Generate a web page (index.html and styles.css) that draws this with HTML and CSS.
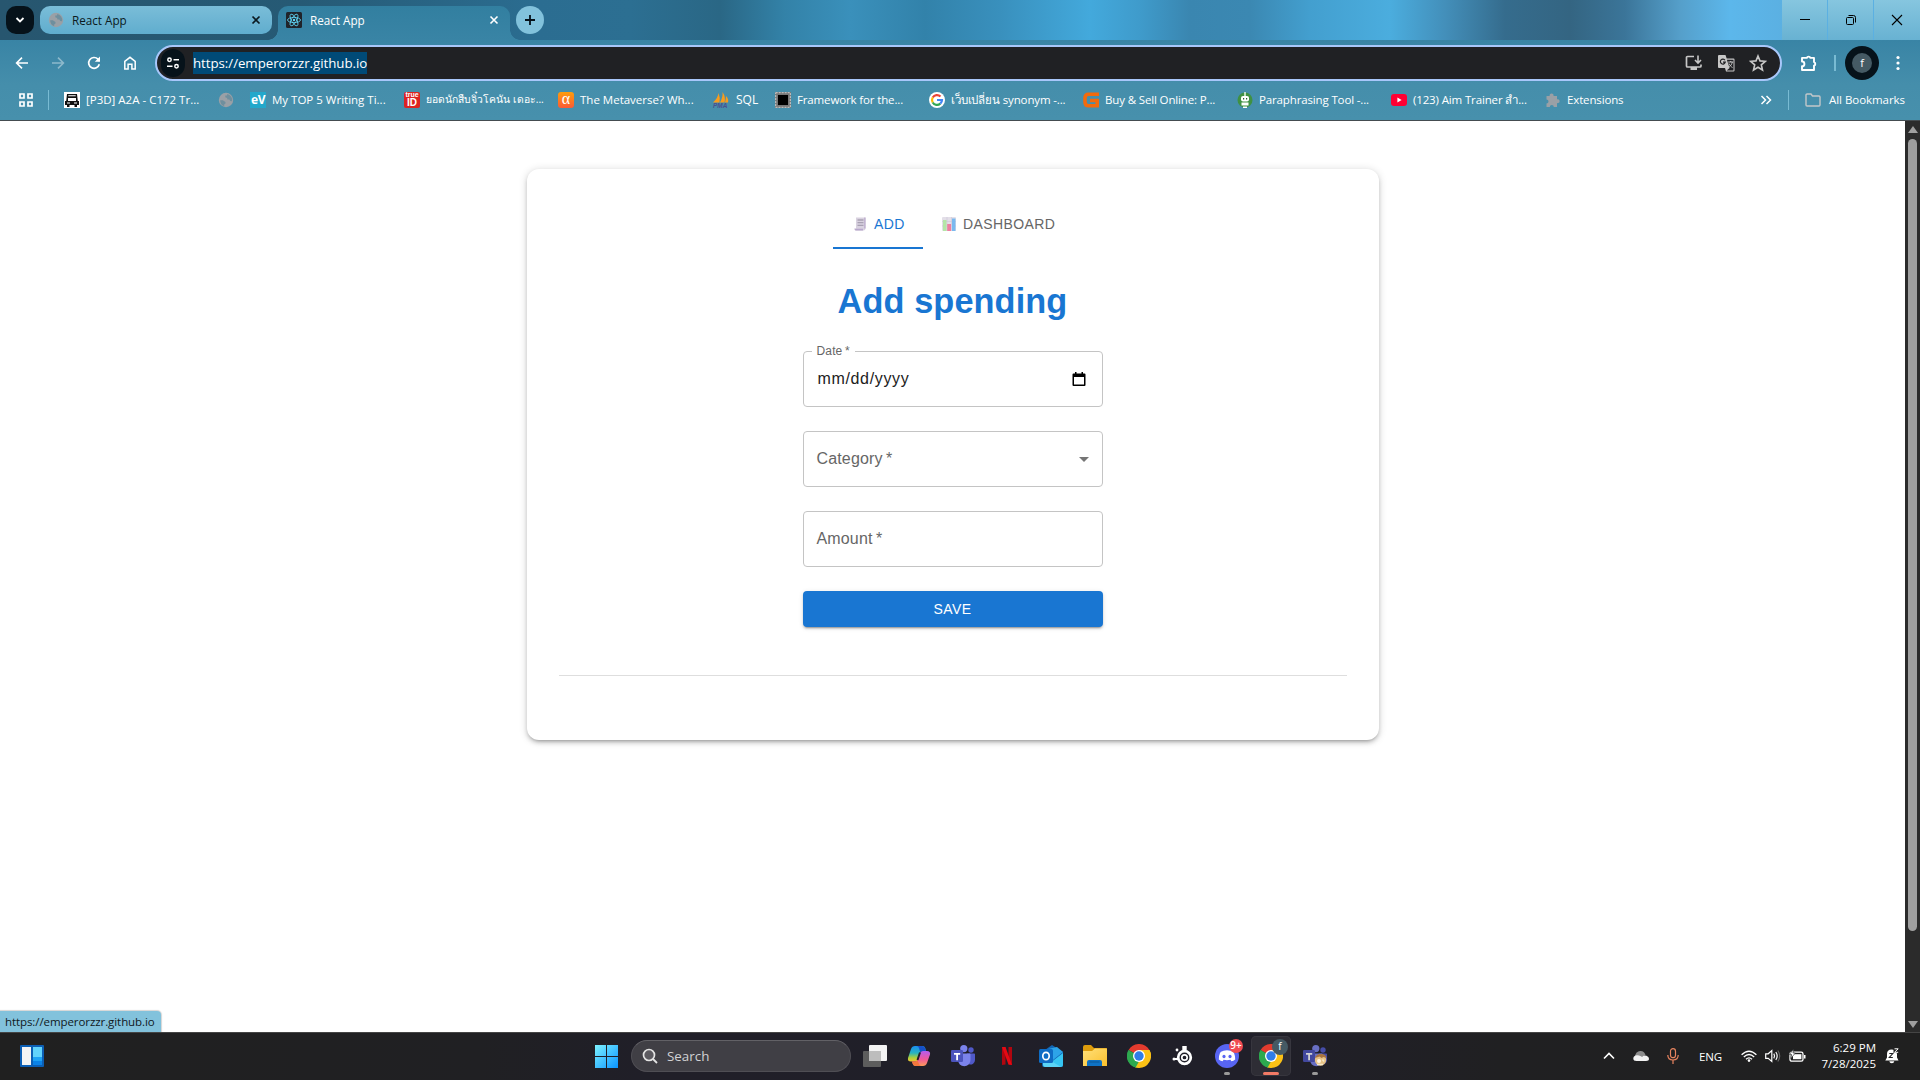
FILE: index.html
```html
<!DOCTYPE html>
<html lang="en">
<head>
<meta charset="utf-8">
<title>React App</title>
<link rel="stylesheet" href="styles.css">
</head>
<body>
<svg class="defs" width="0" height="0">
  <defs>
    <linearGradient id="win" x1="0" y1="0" x2="1" y2="1"><stop offset="0" stop-color="#7df2ff"/><stop offset="1" stop-color="#0a93ff"/></linearGradient>
    <linearGradient id="cpa" x1="0" y1="0" x2="0" y2="1"><stop offset="0" stop-color="#1b8ff0"/><stop offset=".45" stop-color="#27b3c0"/><stop offset=".75" stop-color="#a9cf3c"/><stop offset="1" stop-color="#f5c330"/></linearGradient>
    <linearGradient id="cpb" x1="0" y1="0" x2="0" y2="1"><stop offset="0" stop-color="#b45cf0"/><stop offset=".55" stop-color="#f0589a"/><stop offset="1" stop-color="#fb9a58"/></linearGradient>
    <linearGradient id="fold" x1="0" y1="0" x2="1" y2="1"><stop offset="0" stop-color="#ffe07a"/><stop offset="1" stop-color="#fbc02d"/></linearGradient>
    <symbol id="globe" viewBox="0 0 16 16"><circle cx="8" cy="8" r="7.200" fill="#9aa0a6"/><path d="M2.200 8.300h2.600l2.700 1.600v1.500l-1.300 1v1.800A6.200 6.200 0 0 1 2.200 8.300ZM9.300 2l-.4 1.400H7.300v1.800l1.800.9.300 1.500h2l.8 1.400 1.900.3A6.200 6.200 0 0 0 9.300 2Z" fill="#6f8f9e"/></symbol>
    <symbol id="chrome" viewBox="0 0 24 24"><path d="M12 12L1.600 6A12 12 0 0 1 22.400 6Z" fill="#e33b2e"/><path d="M12 12L22.400 6A12 12 0 0 1 12 24Z" fill="#fbc116"/><path d="M12 12L12 24A12 12 0 0 1 1.600 6Z" fill="#2da94f"/><path d="M12 6H22.400A12 12 0 0 1 24 12L17 14Z" fill="#fbc116"/><path d="M17.200 15L12 24A12 12 0 0 1 8 23.300L12 15Z" fill="#fbc116"/><path d="M1.600 6L7 15L12 17.500L8.600 23.500A12 12 0 0 1 1.600 6Z" fill="#2da94f"/><circle cx="12" cy="12" r="6" fill="#fff"/><circle cx="12" cy="12" r="4.700" fill="#2f7de9"/></symbol>
    <symbol id="teams" viewBox="0 0 24 24"><circle cx="20" cy="6" r="2.700" fill="#5059c9"/><circle cx="12.800" cy="4.600" r="3.600" fill="#7b83eb"/><path d="M16 9.500h7.200c.5 0 .8.400.8.800v5.600a4.600 4.600 0 0 1-6 4.400Z" fill="#5059c9"/><path d="M7 9.500h11.500c.6 0 1 .4 1 1V16a6.200 6.200 0 0 1-12.500 0Z" fill="#7b83eb"/><rect x="0" y="6" width="12" height="12" rx="1.200" fill="#4b53bc"/><path d="M3 9h6.200v1.700H7v5.600H5.200v-5.600H3Z" fill="#fff"/></symbol>
  </defs>
</svg>

<header class="tabstrip">
  <button class="tab-search"><svg width="10" height="10" viewBox="0 0 10 10"><path d="M1.500 3l3.500 3.500L8.500 3" fill="none" stroke="#fff" stroke-width="1.800"/></svg></button>
  <div class="tab">
    <svg width="16" height="16"><use href="#globe"/></svg>
    <span>React App</span>
    <svg class="close" width="10" height="10" viewBox="0 0 10 10"><path d="M1.500 1.500l7 7m0-7l-7 7" stroke="currentColor" stroke-width="1.700"/></svg>
  </div>
  <div class="tab active">
    <svg width="16" height="16" viewBox="0 0 16 16"><rect width="16" height="16" rx="1.500" fill="#20232a"/><g fill="none" stroke="#61dafb" stroke-width=".8"><ellipse cx="8" cy="8" rx="6.500" ry="2.600"/><ellipse cx="8" cy="8" rx="6.500" ry="2.600" transform="rotate(60 8 8)"/><ellipse cx="8" cy="8" rx="6.500" ry="2.600" transform="rotate(120 8 8)"/></g><circle cx="8" cy="8" r="1.200" fill="#61dafb"/></svg>
    <span>React App</span>
    <svg class="close" width="10" height="10" viewBox="0 0 10 10"><path d="M1.500 1.500l7 7m0-7l-7 7" stroke="currentColor" stroke-width="1.600"/></svg>
  </div>
  <button class="new-tab"><svg width="12" height="12" viewBox="0 0 12 12"><path d="M6 1v10M1 6h10" stroke="#06121a" stroke-width="1.800"/></svg></button>
  <div class="window-controls">
    <button><svg width="12" height="12" viewBox="0 0 12 12"><path d="M1 5.500h10" stroke="#000"/></svg></button>
    <button><svg width="12" height="12" viewBox="0 0 12 12"><rect x="1.500" y="3.500" width="7" height="7" rx="1" fill="none" stroke="#000"/><path d="M3.500 1.500h5a2 2 0 0 1 2 2v5" fill="none" stroke="#000"/></svg></button>
    <button><svg width="12" height="12" viewBox="0 0 12 12"><path d="M1 1l10 10M11 1L1 11" stroke="#000" stroke-width="1.100"/></svg></button>
  </div>
</header>

<nav class="toolbar">
  <button><svg width="16" height="16" viewBox="0 0 16 16"><path d="M14 8H3M8 2.600L2.600 8 8 13.400" fill="none" stroke="#fff" stroke-width="1.600"/></svg></button>
  <button><svg width="16" height="16" viewBox="0 0 16 16"><path d="M2 8h11M8 2.600L13.400 8 8 13.400" fill="none" stroke="#8db9cb" stroke-width="1.600"/></svg></button>
  <button><svg width="16" height="16" viewBox="0 0 16 16"><path d="M13.300 9.300A5.400 5.400 0 1 1 12 4.200L13.500 6" fill="none" stroke="#fff" stroke-width="1.700"/><path d="M14 1.600v5.200H8.800Z" fill="#fff"/></svg></button>
  <button><svg width="16" height="16" viewBox="0 0 16 16"><path d="M2.800 6.400L8 2.300l5.200 4.100v7.500H9.900V9.300H6.100v4.600H2.800Z" fill="none" stroke="#fff" stroke-width="1.500"/></svg></button>
  <div class="omnibox">
    <span class="site-info"><svg width="14" height="14" viewBox="0 0 14 14"><g fill="none" stroke="#fff" stroke-width="1.500"><circle cx="3.500" cy="3.800" r="1.700"/><path d="M7.500 3.800H13M1 10.200h5.500"/><circle cx="10.500" cy="10.200" r="1.700"/></g></svg></span>
    <span class="url">https://emperorzzr.github.io</span>
    <div class="omni-icons">
      <svg width="18" height="18" viewBox="0 0 18 18"><path d="M9 2.500H2.500a1 1 0 0 0-1 1V12a1 1 0 0 0 1 1h12.500a1 1 0 0 0 1-1v-1.500" fill="none" stroke="#c7c7c7" stroke-width="1.700"/><path d="M5.500 13h6.500v3H5.500Z" fill="#c7c7c7"/><path d="M13 1.500v7M10 6l3 3 3-3" fill="none" stroke="#c7c7c7" stroke-width="1.600"/></svg>
      <svg width="18" height="18" viewBox="0 0 18 18"><path d="M2 1h6.500l1.200 3.500H16.500a1 1 0 0 1 1 1V16.500a1 1 0 0 1-1 1H9l-1-3.500H2a1 1 0 0 1-1-1V2a1 1 0 0 1 1-1Z" fill="#c7c7c7"/><path d="M9.900 5.700l2.700 8.300-3 2.600h6.900V5.700Z" fill="#202124"/><path d="M8 6.200A2.500 2.500 0 1 0 8.300 8.200H6" fill="none" stroke="#202124" stroke-width="1.200"/><path d="M11.200 8h5M13.700 7v1M15.300 8c-.5 2.200-1.500 3.700-3 4.800M12 9.500c.8 1.800 2 3.200 3.500 4" fill="none" stroke="#c7c7c7"/></svg>
      <svg width="18" height="18" viewBox="0 0 18 18"><path d="M9 2l2 4.900 5.300.4-4 3.500 1.200 5.200L9 13.200 4.500 16l1.200-5.200-4-3.500L7 6.900Z" fill="none" stroke="#c7c7c7" stroke-width="1.600"/></svg>
    </div>
  </div>
  <button class="ext"><svg width="18" height="18" viewBox="0 0 18 18"><path d="M2 3.900h4.800a1.900 1.900 0 0 1 3.600 0H14v4.200a1.900 1.900 0 0 1 0 3.600V16H2v-3.700a2.400 2.400 0 0 0 0-4.800Z" fill="none" stroke="#fff" stroke-width="1.900" stroke-linejoin="round"/></svg></button>
  <i class="divider"></i>
  <button class="profile"><span>f</span></button>
  <button class="menu"><svg width="4" height="16" viewBox="0 0 4 16" fill="#fff"><circle cx="2" cy="2.500" r="1.600"/><circle cx="2" cy="8" r="1.600"/><circle cx="2" cy="13.500" r="1.600"/></svg></button>
</nav>

<nav class="bookmarks">
  <svg class="apps" width="14" height="14" viewBox="0 0 14 14"><g fill="none" stroke="#fff" stroke-width="1.700"><path d="M1 1h4v4H1ZM9 1h4v4H9ZM1 9h4v4H1ZM9 9h4v4H9Z"/></g></svg>
  <i class="divider"></i>
  <a class="bm"><svg width="16" height="16" viewBox="0 0 16 16"><rect width="16" height="16" fill="#fff"/><path d="M3 2h10l.8 7H15v4h-2v2h-2.500v-2h-5v2H3v-2H1V9h1.200Z" fill="#111"/><path d="M4.300 3.300h7.400v1H4.300ZM4 6h8v3H4ZM3 10.500h3v1H3ZM10 10.500h3v1h-3Z" fill="#fff"/></svg><span>[P3D] A2A - C172 Tr...</span></a>
  <a class="bm icon-only"><svg width="16" height="16"><use href="#globe"/></svg></a>
  <a class="bm"><b class="fav ev">eV</b><span>My TOP 5 Writing Ti...</span></a>
  <a class="bm thai"><b class="fav trueid"><small>true</small>ID</b><span lang="th">ยอดนักสืบจิ๋วโคนัน เดอะ...</span></a>
  <a class="bm"><b class="fav alpha">α</b><span>The Metaverse? Wh...</span></a>
  <a class="bm sql"><svg width="18" height="16" viewBox="0 0 18 16"><path d="M1 10.500Q6 6 6.500 1Q8.500 6 7.500 10.500ZM8 10.500Q11 5 10.500 0Q14 5 12.500 10.500ZM13 10.500Q14 7 14 4Q17 7 16 10.500Z" fill="#f89c1c"/><text x="1" y="15.800" font-family="Liberation Sans" font-size="6.500" font-weight="bold" font-style="italic" fill="#4a4f90">PMA</text></svg><span>SQL</span></a>
  <a class="bm tight"><svg width="16" height="16" viewBox="0 0 16 16"><rect width="16" height="16" fill="#777"/><rect x=".7" y=".7" width="14.600" height="14.600" fill="none" stroke="#ccc" stroke-dasharray="2 1"/><rect x="3" y="3" width="10" height="10" fill="#000"/></svg><span>Framework for the...</span></a>
  <a class="bm tight"><svg width="16" height="16" viewBox="0 0 16 16"><circle cx="8" cy="8" r="8" fill="#fff"/><g fill="none" stroke-width="2.200"><path d="M11.500 4.500A5 5 0 0 0 3.700 5.500" stroke="#ea4335"/><path d="M3.700 5.500a5 5 0 0 0 0 5" stroke="#fbbc05"/><path d="M3.700 10.500a5 5 0 0 0 7.600 1.200" stroke="#34a853"/><path d="M11.300 11.700A5 5 0 0 0 13 8H8" stroke="#4285f4"/></g></svg><span lang="th">เว็บเปลี่ยน synonym -...</span></a>
  <a class="bm tight"><svg width="16" height="16" viewBox="0 0 16 16"><path d="M16 2.300H5.500Q2 2.300 2 6v4q0 3.700 3.500 3.700h8.700V8.500H7" fill="none" stroke="#f26a0c" stroke-width="3.600"/></svg><span>Buy &amp; Sell Online: P...</span></a>
  <a class="bm tight"><svg width="16" height="16" viewBox="0 0 16 16"><circle cx="8" cy="8" r="7.500" fill="#3f9142"/><path d="M8 0v4" stroke="#e6f4e6" stroke-width="1.500"/><rect x="4" y="4" width="8" height="5.500" rx="2" fill="#fff"/><path d="M4.500 10.500h7v3h-7ZM6 14.500h4V16H6Z" fill="#fff"/><path d="M6 6h1.200v1.500H6ZM9 6h1.200v1.500H9Z" fill="#27632a"/></svg><span>Paraphrasing Tool -...</span></a>
  <a class="bm tight"><svg width="16" height="16" viewBox="0 0 16 16"><rect y="2" width="16" height="12" rx="3" fill="#ff0033"/><path d="M6.400 5.500L10.600 8 6.400 10.500Z" fill="#fff"/></svg><span lang="th">(123) Aim Trainer สำ...</span></a>
  <a class="bm tight"><svg width="16" height="16" viewBox="0 0 16 16"><path d="M1.500 4h3.200a2 2 0 1 1 3.800 0H12v3.300a2 2 0 1 1 0 3.800V15H8.800a2 2 0 0 0-4 0H1.500v-3.500a2 2 0 0 0 0-4Z" fill="#9aa0a6"/></svg><span>Extensions</span></a>
  <div class="bm-end">
    <svg width="12" height="10" viewBox="0 0 12 10"><path d="M1.500 1l4 4-4 4M6.500 1l4 4-4 4" fill="none" stroke="#fff" stroke-width="1.500"/></svg>
    <i class="divider"></i>
    <svg class="folder" width="16" height="14" viewBox="0 0 16 14"><path d="M1 2a1 1 0 0 1 1-1h4l1.500 2H14a1 1 0 0 1 1 1v8a1 1 0 0 1-1 1H2a1 1 0 0 1-1-1Z" fill="none" stroke="#c3c7c9" stroke-width="1.400"/></svg>
    <span>All Bookmarks</span>
  </div>
</nav>

<div class="viewport">
  <main class="page">
    <section class="card">
      <div class="tabs">
        <button class="mui-tab selected">
          <svg width="14" height="14" viewBox="0 0 14 14"><path d="M2 .5H11.500V11.500q0 2-2 2H1.500q-1.200 0-1.200-2H2Z" fill="#d9d2e0"/><path d="M10.300.5h1.200v11h-1.200ZM.5 11.700h8.500v1.800H1.500Z" fill="#b8a8cc"/><path d="M3.500 3h6M3.500 5.700h6M3.500 8.400h6" stroke="#a9a1b3" stroke-width="1.300"/></svg>
          <span>ADD</span>
        </button>
        <button class="mui-tab">
          <svg width="14" height="14" viewBox="0 0 14 14"><rect width="14" height="14" rx="1" fill="#e3dfe8"/><path d="M0 4.500h14M0 9h14M5 0v14M9.500 0v14" stroke="#cdc6d6" stroke-width=".6"/><rect x="1" y="3" width="3.500" height="11" fill="#b4e6a6"/><rect x="5.200" y="7" width="3.800" height="7" fill="#ee7fa0"/><rect x="10" y="1.500" width="3.500" height="12.500" fill="#7ab9ef"/></svg>
          <span>DASHBOARD</span>
        </button>
      </div>
      <h1>Add spending</h1>
      <form class="form">
        <div class="field date">
          <label>Date&#8201;*</label>
          <span class="value">mm/dd/yyyy</span>
          <svg width="14" height="15" viewBox="0 0 14 15"><path d="M3 0h1.500v1.500h5V0H11v1.500h1.500q1 0 1 1V13q0 1-1 1h-11q-1 0-1-1V2.500q0-1 1-1H3ZM2 5v7.600h10V5Z" fill="#000"/></svg>
        </div>
        <div class="field"><span class="placeholder">Category&#8201;*</span><i class="caret"></i></div>
        <div class="field"><span class="placeholder">Amount&#8201;*</span></div>
        <button class="save" type="button">SAVE</button>
      </form>
      <hr>
    </section>
  </main>
  <aside class="scrollbar"><i class="up"></i><i class="thumb"></i><i class="down"></i></aside>
  <div class="status">https://emperorzzr.github.io</div>
</div>

<footer class="taskbar">
  <div class="widgets"><svg width="24" height="22" viewBox="0 0 24 22"><rect width="24" height="22" rx="1" fill="#0c5fb5"/><rect x="2" y="2" width="9" height="18" fill="#f4f4f4"/><rect x="13" y="2" width="9" height="10" fill="#62d3fb"/><rect x="13" y="12" width="9" height="4" fill="#1ea3f5"/><rect x="13" y="16" width="9" height="4" fill="#0b82e6"/></svg></div>
  <div class="apps-row">
    <svg class="start" width="23" height="23" viewBox="0 0 23 23"><path d="M0 0h11v11H0ZM12 0h11v11H12ZM0 12h11v11H0ZM12 12h11v11H12Z" fill="url(#win)"/></svg>
    <div class="search"><svg width="16" height="16" viewBox="0 0 16 16"><circle cx="7" cy="7" r="5.500" fill="#5c5a60" stroke="#e4e4e4" stroke-width="1.700"/><path d="M11 11l4 4" stroke="#e4e4e4" stroke-width="1.800"/></svg><span>Search</span></div>
    <div class="app"><svg width="24" height="24" viewBox="0 0 24 24"><rect x="6" y="1" width="18" height="16" rx="1" fill="#f3f3f3"/><rect x="0" y="7" width="18" height="16" rx="1" fill="#5d5d5d"/><path d="M6 7h12v10H6Z" fill="#bdbdbd"/></svg></div>
    <div class="app"><svg width="24" height="24" viewBox="0 0 24 24"><path d="M8 2h7.500q2 0 2.700 2l.8 3h-3.500q-2 0-2.600 2L11 15q-.8 2.500-3 2.500H4Q.3 17.500 1 14L4 5Q5 2 8 2Z" fill="url(#cpa)"/><path d="M16 22H8.500q-2 0-2.700-2L5 17.500h3q2.300 0 3-2.500l2-6q.7-2 2.800-2H20q3.700 0 3 3.500L20 19q-1 3-4 3Z" fill="url(#cpb)"/><path d="M15 2q2.200 0 3 2l1 3h-3.500q-1.500 0-2.300 1.200L12 4q-.6-2-2.500-2Z" fill="#1650c8"/><path d="M9 22q-2.500 0-3.200-2L5 17.500h3q1.500 0 2.400-1.300L12 20q.7 2 2.500 2Z" fill="#f4773d"/><path d="M13 8.500L10.500 16" stroke="#201f28" stroke-width="2"/></svg></div>
    <div class="app"><svg width="24" height="24"><use href="#teams"/></svg></div>
    <div class="app"><svg width="24" height="24" viewBox="0 0 24 24"><path d="M7 3h3.500v17.500L7 21ZM13.500 3H17v18l-3.500-.5Z" fill="#b1060f"/><path d="M7 3h3.500L17 21l-3.500-.5Z" fill="#e50914"/></svg></div>
    <div class="app"><svg width="24" height="24" viewBox="0 0 24 24"><path d="M3 8L13 1l11 7v13q0 2-2 2H5q-2 0-2-2Z" fill="#1066b5"/><path d="M9 5l9-2 6 5-10 8Z" fill="#2da4e8"/><path d="M24 9v12q0 2-2 2H6Z" fill="#36c5f2"/><path d="M4 12l18 11H6q-2 0-2-2Z" fill="#5bd5f7"/><rect y="5" width="14" height="14" rx="1.500" fill="#0f6cc4"/><ellipse cx="7" cy="12" rx="3.200" ry="3.700" fill="none" stroke="#fff" stroke-width="1.700"/></svg></div>
    <div class="app"><svg width="24" height="24" viewBox="0 0 24 24"><path d="M0 3q0-2 2-2h6l3 3h12q1 0 1 1v6H0Z" fill="#dd9c0c"/><path d="M0 7h9l3-2.500h12V22H0Z" fill="url(#fold)"/><path d="M4 22v-4q0-2 2-2h11q2 0 2 2v4Z" fill="#0f72c4"/><path d="M6.500 18h10" stroke="#0a5795"/></svg></div>
    <div class="app"><svg width="24" height="24"><use href="#chrome"/></svg></div>
    <div class="app"><svg width="24" height="24" viewBox="0 0 24 24"><g fill="none" stroke="#fff"><circle cx="13.500" cy="13.500" r="6.300" stroke-width="2.700"/><circle cx="13.500" cy="13.500" r="2.700" stroke-width="1.700"/><path d="M7 15H3M12.400 6.500V3h2.200v3.500" stroke-width="2.200"/></g><circle cx="6" cy="6" r="1.400" fill="#fff"/><circle cx="3" cy="15" r="1.500" fill="#fff"/></svg></div>
    <div class="app running"><svg width="24" height="24" viewBox="0 0 24 24"><circle cx="12" cy="12" r="12" fill="#5865f2"/><path d="M8.500 6.800q3.500-.9 7 0l.5.200q2.500.5 3 2 1.500 3.500 1.200 6.500-1.800 1.600-3.800 1.800l-1-1.500q-3.400.8-6.800 0l-1 1.500q-2-.2-3.800-1.800-.3-3 1.200-6.500.5-1.500 3-2Z" fill="#fff"/><ellipse cx="9" cy="12.500" rx="1.600" ry="1.800" fill="#5865f2"/><ellipse cx="15" cy="12.500" rx="1.600" ry="1.800" fill="#5865f2"/></svg><b class="badge count">9+</b></div>
    <div class="app running current"><svg width="24" height="24"><use href="#chrome"/></svg><b class="badge who">f</b></div>
    <div class="app running"><svg width="24" height="24" viewBox="0 0 24 24"><use href="#teams" opacity=".8"/><circle cx="17.500" cy="16" r="5.700" fill="#e6c285"/><path d="M12 14q1-4 6-4t5.500 4l-3-1-2 1-2-1.500Z" fill="#a9743f"/><circle cx="16" cy="17" r="2" fill="#fff3df"/><path d="M19.500 15.500l1.500 2M14 20.500h6" stroke="#f5e8c8" stroke-width="1.500"/></svg></div>
  </div>
  <div class="tray">
    <svg class="t-up" width="12" height="8" viewBox="0 0 12 8"><path d="M1 6.500l5-5 5 5" fill="none" stroke="#fff" stroke-width="1.600"/></svg>
    <svg class="t-cloud" width="16" height="12" viewBox="0 0 16 12"><path d="M2 6q1-4.500 5-5 4-.5 5.500 4L6 8Z" fill="#8d8d8d"/><path d="M1 6.500q2-2 5-1l3 1.300q2-2 4.500-1 2.500 1.200 2.500 3Q16 11 13 11H3.500Q.3 11 .3 8.500q0-1 .7-2Z" fill="#f2f2f2"/></svg>
    <svg class="t-mic" width="12" height="16" viewBox="0 0 12 16"><g fill="none" stroke="#e8845f" stroke-width="1.200"><rect x="3.500" y=".7" width="5" height="9" rx="2.500"/><path d="M.8 7q0 5 5.200 5t5.200-5M6 12v4"/></g></svg>
    <span class="lang">ENG</span>
    <svg class="t-wifi" width="16" height="12" viewBox="0 0 16 12"><g fill="none" stroke="#fff" stroke-width="1.300"><path d="M.6 4.800q7.400-7.200 14.800 0M2.800 7q5.200-5 10.400 0M5 9.200q3-2.700 6 0"/></g><circle cx="8" cy="10.600" r="1.300" fill="#fff"/></svg>
    <svg class="t-vol" width="16" height="14" viewBox="0 0 16 14"><path d="M.7 4.800h2.500L6.800 1.500v11L3.200 9.300H.7Z" fill="none" stroke="#fff" stroke-width="1.200"/><path d="M8.800 4.700q1.500 2.300 0 4.600M10.800 3q2.800 4 0 8" fill="none" stroke="#fff" stroke-width="1.200"/><path d="M12.800 1.500q3.800 5.500 0 11" fill="none" stroke="#666" stroke-width="1.200"/></svg>
    <svg class="t-bat" width="17" height="14" viewBox="0 0 17 14"><rect x="1" y="3.200" width="13" height="9" rx="1.800" fill="none" stroke="#fff" stroke-width="1.300"/><rect x="4" y="5.200" width="8.400" height="5" fill="#fff"/><path d="M15 6h1.500v3.500H15Z" fill="#fff"/><path d="M4.500 0L.5 5.500h2L1.800 9.500 6.300 4H4Z" fill="#fff" stroke="#202124" stroke-width=".6"/></svg>
    <div class="clock"><span>6:29 PM</span><span>7/28/2025</span></div>
    <svg class="t-bell" width="14" height="16" viewBox="0 0 14 16"><path d="M2 6q0-4.500 4.500-4.500T12 6v3.500l1.500 3H.3L2 9.500Z" fill="#fff"/><path d="M4.300 13.200h5q-.3 2-2.500 2t-2.500-2Z" fill="#fff"/><path d="M4.300 5.500h3.500L4.300 9.500h3.500" fill="none" stroke="#202124" stroke-width="1.100"/><path d="M8.500 0H14v5H8.500Z" fill="#202020"/><path d="M9.500.8h3.700L9.500 4.300h3.700" fill="none" stroke="#fff"/></svg>
  </div>
</footer>
</body>
</html>
```
FILE: styles.css
```css
* { box-sizing: border-box; }
body {
  margin: 0;
  width: 1920px;
  height: 1080px;
  overflow: hidden;
  display: flex;
  flex-direction: column;
  background: #fff;
  font: 11.5px "Open Sans", "Noto Sans", sans-serif;
}
button { border: 0; padding: 0; background: none; font: inherit; color: inherit; display: flex; align-items: center; justify-content: center; }
svg { display: block; flex: none; }
.defs { position: absolute; }
span { white-space: nowrap; }
.divider { width: 2px; height: 16px; background: #79bbd3; flex: none; }

/* tab strip */
.tabstrip {
  height: 40px;
  flex: none;
  display: flex;
  align-items: flex-start;
  padding: 6px 0 0 6px;
  background: linear-gradient(90deg, #27566f 0, #265a75 300px, #2b6d91 540px, #2c6f92 630px, #2a6785 720px, #3382a8 785px, #3a90bb 850px, #3282aa 925px, #3990bd 1000px, #43a9dc 1090px, #3f9bcb 1140px, #3a86b0 1190px, #3b88b2 1250px, #439fcf 1310px, #4badde 1390px, #438fba 1445px, #356c8d 1505px, #346582 1570px, #3b7599 1625px, #559fca 1680px, #5cb7eb 1730px, #5bb0e2 1783px);
}
.tab-search { width: 28px; height: 28px; border-radius: 10px; background: #06121a; margin-right: 6px; }
.tab {
  width: 232px;
  height: 28px;
  display: flex;
  align-items: center;
  border-radius: 10px;
  padding: 0 11px 0 8px;
  background: linear-gradient(#7abdd8, #60adce);
  color: #0b1a20;
}
.tab svg:first-child { margin-right: 8px; }
.tab span { font-size: 11.7px; }
.tab .close { margin-left: auto; }
.tab.active {
  position: relative;
  height: 34px;
  margin-left: 6px;
  padding-bottom: 6px;
  color: #fff;
  border-radius: 10px 10px 0 0;
  background: linear-gradient(#327fa0, #3984a5);
}
.tab.active::before, .tab.active::after {
  content: "";
  position: absolute;
  bottom: 0;
  width: 10px;
  height: 10px;
}
.tab.active::before { left: -10px; background: radial-gradient(circle at 0 0, transparent 9.5px, #3984a5 10px); }
.tab.active::after { right: -10px; background: radial-gradient(circle at 100% 0, transparent 9.5px, #3984a5 10px); }
.new-tab { width: 28px; height: 28px; border-radius: 50%; background: #82c2dc; margin-left: 6px; }
.window-controls { display: flex; gap: 1px; margin: -6px 0 0 auto; }
.window-controls button { width: 45px; height: 40px; background: linear-gradient(#86c6df, #68b2d2); }
.window-controls button:last-child { width: 46px; }

/* toolbar */
.toolbar {
  height: 45px;
  flex: none;
  display: flex;
  align-items: center;
  background: linear-gradient(#3984a5, #458eab);
  padding-left: 4px;
}
.toolbar > button { width: 36px; height: 36px; }
.omnibox {
  width: 1627px;
  height: 36px;
  margin-left: 7px;
  border: 2px solid #a8c7fa;
  border-radius: 18px;
  background: #202124;
  display: flex;
  align-items: center;
  padding: 0 13px 0 4px;
  color: #fff;
}
.site-info { width: 24px; height: 28px; border-radius: 12px; background: #06121a; display: flex; align-items: center; justify-content: center; }
.url { margin-left: 8px; height: 22px; line-height: 22px; background: #004a77; font-size: 13.3px; letter-spacing: -.05px; }
.omni-icons { margin-left: auto; display: flex; gap: 14px; }
.toolbar .ext { margin-left: 9px; }
.toolbar > .divider { margin-left: 7px; }
.toolbar .profile { width: 34px; height: 34px; border-radius: 50%; background: #06121a; margin-left: 9px; color: #fff; font-size: 11px; }
.profile span { width: 20px; height: 20px; line-height: 19px; text-align: center; border-radius: 50%; background: #455a64; }
.toolbar .menu { width: 20px; margin-left: 9px; }

/* bookmarks */
.bookmarks {
  height: 36px;
  flex: none;
  display: flex;
  align-items: center;
  padding: 0 15px 6px 19px;
  background: linear-gradient(#458eab, #4790ac);
  border-bottom: 1px solid #444c50;
  color: #fff;
}
.bookmarks > .divider { margin: 0 15px; height: 20px; width: 1px; }
.bm { width: 154px; height: 20px; display: flex; align-items: center; gap: 6px; flex: none; }
.tight span { letter-spacing: -.14px; }
.thai { font-size: 10.3px; }
.icon-only { width: 32px; }
.sql { width: 63px; }
.sql span { font-size: 12px; }
.fav { width: 16px; height: 16px; color: #fff; text-align: center; flex: none; }
.ev { background: #23a8cb; font: bold 12px/15px "Open Sans", sans-serif; letter-spacing: -.5px; }
.trueid { background: #dd2222; border-radius: 2px; font: bold 10px/9px "Liberation Sans", sans-serif; }
.trueid small { display: block; font-size: 7px; line-height: 6px; }
.alpha { background: linear-gradient(#ff9d0a, #fb5a35); border-radius: 3px; font: 16px/14px "Liberation Serif", serif; }
.bm-end { margin-left: auto; display: flex; align-items: center; }
.bm-end .divider { margin: 0 16px; height: 20px; width: 1px; }
.bm-end span { letter-spacing: -.05px; }
.folder { margin-right: 8px; }

/* page */
.viewport { position: relative; flex: 1; display: flex; min-height: 0; }
.page { flex: 1; padding-top: 48px; background: #fff; font-family: "Liberation Sans", Arial, sans-serif; }
.card {
  width: 852px;
  height: 571px;
  margin: 0 auto;
  padding: 32px;
  border-radius: 12px;
  background: #fff;
  box-shadow: 0 3px 3px -2px rgba(0,0,0,.2), 0 3px 4px 0 rgba(0,0,0,.14), 0 1px 8px 0 rgba(0,0,0,.16);
  display: flex;
  flex-direction: column;
  align-items: center;
}
.tabs { display: flex; height: 48px; }
.mui-tab { width: 149px; height: 48px; justify-content: flex-start; padding: 0 0 1px 19px; gap: 7px; font-size: 14px; letter-spacing: .4px; color: #666; border-bottom: 2px solid transparent; }
.mui-tab.selected { width: 90px; padding-left: 21px; gap: 6px; color: #1976d2; border-color: #1976d2; }
h1 { margin: 31px 0 0; font-size: 34.3px; line-height: 42px; letter-spacing: .1px; color: #1976d2; }
.form { width: 300px; margin-top: 29px; display: flex; flex-direction: column; gap: 24px; }
.field { position: relative; height: 56px; border: 1px solid #c4c4c4; border-radius: 4px; padding: 0 13px; display: flex; align-items: center; justify-content: space-between; font-size: 16px; letter-spacing: .15px; }
.field label { position: absolute; left: 8px; top: -9px; padding: 0 5px; background: #fff; color: #666; font-size: 12px; line-height: 16px; }
.date { padding: 0 16px 0 14px; }
.value { color: #212121; letter-spacing: .65px; }
.placeholder { color: #666; }
.caret { border: 5px solid transparent; border-top-color: #757575; border-bottom: 0; }
.save { height: 36px; border-radius: 4px; background: #1976d2; color: #fff; font-size: 14px; letter-spacing: .4px; box-shadow: 0 3px 1px -2px rgba(0,0,0,.2), 0 2px 2px 0 rgba(0,0,0,.14), 0 1px 5px 0 rgba(0,0,0,.12); }
hr { width: 100%; height: 1px; margin: 48px 0 0; border: 0; background: #dedede; }
.scrollbar { width: 15px; background: #2b2b2b; display: flex; flex-direction: column; align-items: center; padding: 5px 0 4px; }
.scrollbar i { flex: none; }
.up { border: 5px solid transparent; border-top: 0; border-bottom: 7px solid #9f9f9f; }
.down { border: 5px solid transparent; border-bottom: 0; border-top: 7px solid #9f9f9f; margin-top: auto; }
.thumb { width: 9px; height: 792px; margin-top: 6px; border-radius: 5px; background: #9f9f9f; }
.status { position: absolute; left: 0; bottom: 0; width: 161px; height: 21px; padding-left: 5px; line-height: 22px; background: #82c2dc; border-top-right-radius: 4px; box-shadow: 0 0 1px 1px #d5d5d5; color: #10181c; letter-spacing: -.08px; white-space: nowrap; }

/* taskbar */
.taskbar { position: relative; height: 48px; flex: none; display: flex; background: linear-gradient(90deg, #202020 0, #202023 480px, #201f28 640px, #201f29 1250px, #202022 1500px, #202020); border-top: 1px solid #454545; color: #fff; }
.widgets { width: 595px; padding: 12px 0 0 20px; }
.apps-row { display: flex; align-items: center; height: 46px; }
.search { width: 220px; height: 32px; margin: 0 2px 0 13px; border-radius: 16px; background: #403f45; border: 1px solid #4f4e54; border-top-color: #626166; display: flex; align-items: center; gap: 9px; padding-left: 10px; font-size: 13.4px; color: #d2d2d4; }
.app { position: relative; width: 40px; height: 40px; margin: 0 2px; display: flex; align-items: center; justify-content: center; }
.running::after { content: ""; position: absolute; bottom: 1px; width: 6px; height: 3px; border-radius: 2px; background: #9a9a9a; }
.current { background: #2e2d35; border-radius: 5px; box-shadow: inset 0 0 0 1px #37363e; }
.current::after { width: 16px; background: #f27a66; }
.badge { position: absolute; top: 3px; right: 4px; width: 15px; height: 15px; border-radius: 8px; text-align: center; font: 10px/14px "Open Sans", sans-serif; }
.count { background: #f04b52; width: 14px; height: 14px; font-weight: 600; line-height: 13px; }
.who { background: #455a64; width: 16px; height: 16px; right: 3px; }
.tray { margin-left: auto; height: 46px; padding-right: 21px; display: flex; align-items: center; }
.t-cloud { margin-left: 18px; }
.t-mic { margin-left: 18px; }
.lang { margin-left: 20px; letter-spacing: -.1px; }
.t-wifi { margin-left: 19px; }
.t-vol { margin-left: 8px; }
.t-bat { margin-left: 8px; }
.clock { width: 70px; display: flex; flex-direction: column; align-items: flex-end; line-height: 16px; font-size: 11.5px; }
.t-bell { margin-left: 9px; }
```
